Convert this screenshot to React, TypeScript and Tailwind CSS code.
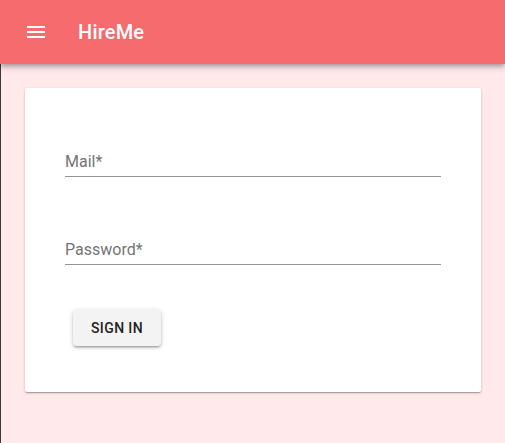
import React from "react";

const MenuIcon = () => (
    <svg width="24" height="24" viewBox="0 0 24 24" fill="white">
        <path d="M3 18h18v-2H3v2zm0-5h18v-2H3v2zm0-7v2h18V6H3z" />
    </svg>
);

const Field = ({ label }: { label: string }) => (
    <div className="h-[25px] border-b border-[#949494] text-[16px] leading-[19px] text-[#757575]">
        {label}
    </div>
);

const App = () => {
    return (
        <div className="min-h-[443px] bg-[#ffe9eb] font-['Roboto','Liberation_Sans',sans-serif] flex flex-col">
            {/* App bar */}
            <header className="relative z-10 h-16 bg-[#f66b6e] flex items-center pl-6 shadow-[0_2px_4px_-1px_rgba(0,0,0,0.2),0_4px_5px_0_rgba(0,0,0,0.14),0_1px_10px_0_rgba(0,0,0,0.12)]">
                <MenuIcon />
                <h1 className="ml-[30px] text-white text-[20px] font-medium tracking-[0.2px]">HireMe</h1>
            </header>

            {/* Content */}
            <main className="flex-1 border-l border-[#3a3a3a] pl-6 pr-6 pt-6">
                <div className="bg-white rounded-[2px] px-10 pt-16 pb-[46px] shadow-[0_1px_3px_0_rgba(0,0,0,0.2),0_1px_1px_0_rgba(0,0,0,0.14),0_2px_1px_-1px_rgba(0,0,0,0.12)]">
                    <Field label="Mail*" />
                    <div className="mt-[63px]">
                        <Field label="Password*" />
                    </div>
                    <button
                        type="button"
                        className="mt-[45px] ml-2 w-[88px] h-9 rounded-[4px] bg-[#f3f3f3] text-[#222] text-[14px] font-medium uppercase tracking-[0.4px] shadow-[0_1px_5px_0_rgba(0,0,0,0.2),0_2px_2px_0_rgba(0,0,0,0.14),0_3px_1px_-2px_rgba(0,0,0,0.12)]"
                    >
                        Sign in
                    </button>
                </div>
            </main>
        </div>
    );
};

export default App;
